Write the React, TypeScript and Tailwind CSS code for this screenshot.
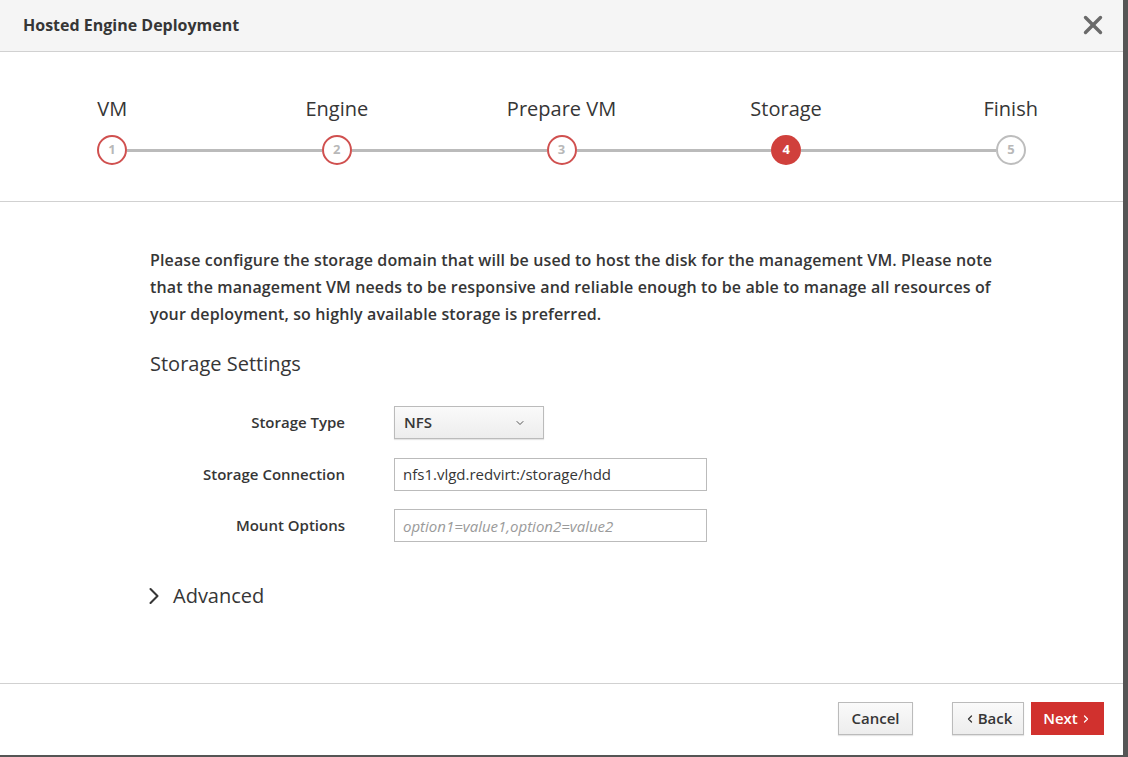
import { X, ChevronDown, ChevronRight, ChevronLeft } from "lucide-react"

const steps = [
  { n: 1, label: "VM", state: "done" },
  { n: 2, label: "Engine", state: "done" },
  { n: 3, label: "Prepare VM", state: "done" },
  { n: 4, label: "Storage", state: "active" },
  { n: 5, label: "Finish", state: "todo" },
]

function StepCircle({ n, state }: { n: number; state: string }) {
  if (state === "active") {
    return (
      <div className="flex h-[30px] w-[30px] shrink-0 items-center justify-center rounded-full bg-[#d0403c] text-[13px] font-bold text-white">
        {n}
      </div>
    )
  }
  const border = state === "done" ? "border-[#d0504f]" : "border-[#bdbdbd]"
  return (
    <div
      className={`flex h-[30px] w-[30px] shrink-0 items-center justify-center rounded-full border-2 bg-white text-[13px] font-bold text-[#b8b8b8] ${border}`}
    >
      {n}
    </div>
  )
}

export default function App() {
  return (
    <div className="h-[757px] w-[1128px] bg-[#555555] font-['Open_Sans',sans-serif] text-[#363636]">
      <div className="flex h-[755px] w-[1123px] flex-col bg-white">
        <header className="flex h-[52px] shrink-0 items-center justify-between border-b border-[#d1d1d1] bg-[#f5f5f5] pl-[23px] pr-[15px]">
          <h1 className="-mt-[1px] text-[16px] font-bold">Hosted Engine Deployment</h1>
          <X className="-mt-[1px] h-[30px] w-[30px] text-[#6a6a6a]" strokeWidth={2.7} />
        </header>

        <div className="h-[150px] shrink-0 border-b border-[#d1d1d1] pt-[43px]">
          <div className="grid grid-cols-5 text-center text-[20px] leading-[28px]">
            {steps.map((s) => (
              <div key={s.n}>{s.label}</div>
            ))}
          </div>
          <div className="mt-[12px] flex items-center px-[97px]">
            {steps.map((s, i) => (
              <div key={s.n} className={i < steps.length - 1 ? "flex flex-1 items-center" : "flex items-center"}>
                <StepCircle n={s.n} state={s.state} />
                {i < steps.length - 1 && <div className="h-[3px] flex-1 bg-[#bbbbbb]" />}
              </div>
            ))}
          </div>
        </div>

        <main className="flex-1 pl-[150px] pt-[45px]">
          <p className="w-[860px] text-[16px] font-semibold leading-[27px] tracking-[0.13px]">
            Please configure the storage domain that will be used to host the disk for the management VM. Please note
            that the management VM needs to be responsive and reliable enough to be able to manage all resources of
            your deployment, so highly available storage is preferred.
          </p>

          <h2 className="mt-[22px] text-[20px] leading-[28px]">Storage Settings</h2>

          <div className="mt-[28px] flex flex-col gap-[18.5px]">
            <div className="flex items-center">
              <label className="w-[195px] text-right text-[15px] font-semibold">Storage Type</label>
              <div className="ml-[49px] flex h-[33px] w-[150px] items-center justify-between border border-[#bbbbbb] bg-gradient-to-b from-[#fafafa] to-[#ededed] pl-[9px] pr-[17px] text-[15px] font-semibold shadow-[0_1px_1px_rgba(0,0,0,0.1)]">
                <span>NFS</span>
                <ChevronDown className="h-[12px] w-[12px] text-[#555]" strokeWidth={2} />
              </div>
            </div>
            <div className="flex items-center">
              <label className="w-[195px] text-right text-[15px] font-semibold">Storage Connection</label>
              <input
                readOnly
                value="nfs1.vlgd.redvirt:/storage/hdd"
                className="ml-[49px] h-[33px] w-[313px] border border-[#bbbbbb] px-[8px] text-[15px] text-[#363636] outline-none"
              />
            </div>
            <div className="flex items-center">
              <label className="w-[195px] text-right text-[15px] font-semibold">Mount Options</label>
              <input
                readOnly
                placeholder="option1=value1,option2=value2"
                className="ml-[49px] h-[33px] w-[313px] border border-[#bbbbbb] px-[8px] text-[15px] outline-none placeholder:italic placeholder:text-[#9a9a9a]"
              />
            </div>
          </div>

          <div className="mt-[40px] flex items-center">
            <ChevronRight className="-ml-[10px] h-[28px] w-[28px] text-[#363636]" strokeWidth={1.8} />
            <span className="ml-[5px] text-[20px] leading-[28px]">Advanced</span>
          </div>
        </main>

        <footer className="flex h-[72px] shrink-0 items-start justify-end border-t border-[#d1d1d1] pr-[19px] pt-[18px]">
          <button className="h-[33px] w-[75px] border border-[#bbbbbb] bg-gradient-to-b from-[#fafafa] to-[#ededed] text-[15px] font-semibold shadow-[0_1px_1px_rgba(0,0,0,0.1)]">
            Cancel
          </button>
          <button className="ml-[39px] flex h-[33px] w-[72px] items-center justify-center gap-[2px] border border-[#bbbbbb] bg-gradient-to-b from-[#fafafa] to-[#ededed] text-[15px] font-semibold shadow-[0_1px_1px_rgba(0,0,0,0.1)]">
            <ChevronLeft className="h-[12px] w-[12px]" strokeWidth={2.5} />
            Back
          </button>
          <button className="ml-[7px] flex h-[33px] w-[73px] items-center justify-center gap-[2px] bg-[#d1312e] text-[15px] font-semibold text-white">
            Next
            <ChevronRight className="h-[12px] w-[12px]" strokeWidth={2.5} />
          </button>
        </footer>
      </div>
    </div>
  )
}
